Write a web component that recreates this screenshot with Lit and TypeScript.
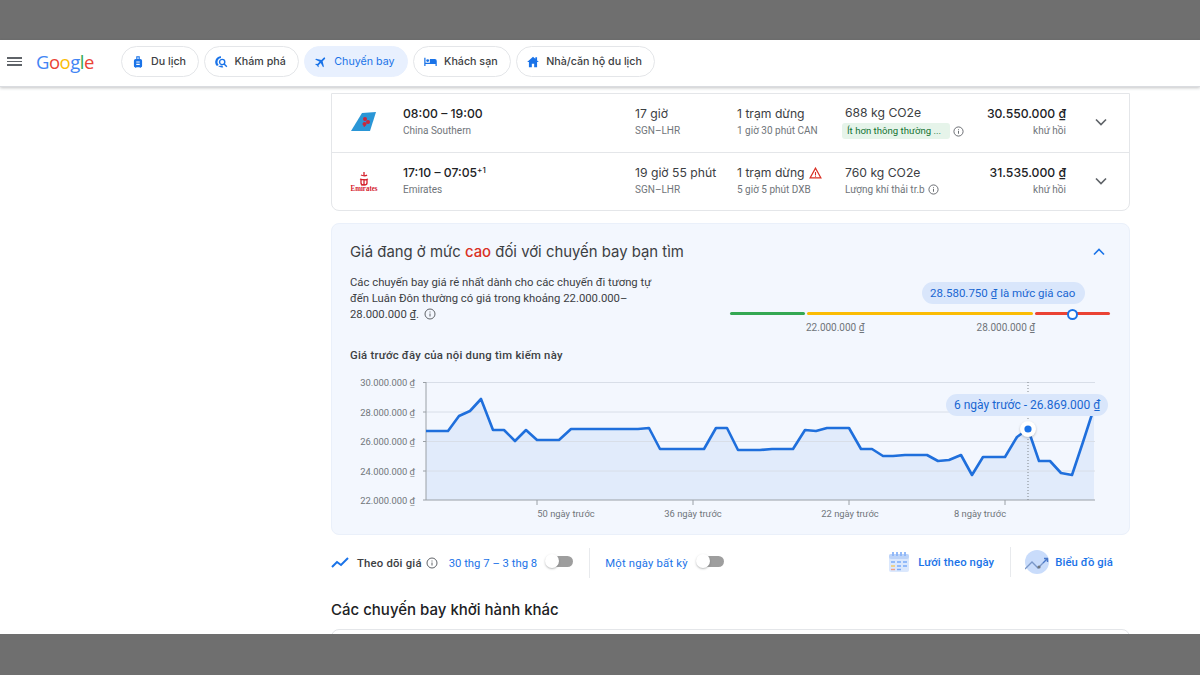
import { LitElement, css, html, svg } from 'lit';
import { customElement } from 'lit/decorators.js';

const BLUE = '#1a73e8';

// chart points in page pixels, the svg below is placed at 340,370
const line: [number, number][] = [
  [426, 431], [448, 431], [459, 416], [470, 411], [481, 399], [493, 430], [504, 430], [515, 441],
  [526, 430], [537, 440], [559, 440], [571, 429], [638, 429], [649, 428], [660, 449], [704, 449],
  [716, 428], [727, 428], [738, 450], [760, 450], [772, 449], [793, 449], [805, 430], [816, 431],
  [827, 428], [849, 428], [861, 449], [872, 449], [883, 456], [893, 456], [905, 455], [927, 455],
  [938, 461], [949, 460], [961, 455], [972, 475], [983, 457], [993, 457], [1005, 457], [1017, 437],
  [1028, 429], [1039, 461], [1050, 461], [1061, 473], [1072, 475], [1083, 442], [1094, 408],
];

const yLabels = ['30.000.000 ₫', '28.000.000 ₫', '26.000.000 ₫', '24.000.000 ₫', '22.000.000 ₫'];
const gridY = [382.5, 412, 441.5, 471, 500];
const xLabels: [number, string][] = [
  [566, '50 ngày trước'],
  [693, '36 ngày trước'],
  [850, '22 ngày trước'],
  [980, '8 ngày trước'],
];
const xTicks = [537, 693, 849, 1005];

const infoIcon = html`<svg class="info" viewBox="0 0 24 24" width="12" height="12">
  <circle cx="12" cy="12" r="10" fill="none" stroke="currentColor" stroke-width="2"></circle>
  <path d="M11 11h2v6h-2zM11 7h2v2h-2z" fill="currentColor"></path>
</svg>`;

const chevron = (up: boolean) => html`<svg viewBox="0 0 24 24" width="20" height="20">
  <path d=${up ? 'M6 15l6-6 6 6' : 'M6 9l6 6 6-6'} fill="none" stroke=${up ? BLUE : '#5f6368'} stroke-width="2"></path>
</svg>`;

@customElement('app-root')
export class AppRoot extends LitElement {
  static styles = css`
    :host {
      display: flex;
      flex-direction: column;
      width: 1200px;
      height: 675px;
      overflow: hidden;
      background: #fff;
      font-family: Roboto, 'Noto Sans', sans-serif;
      color: #3c4043;
    }
    .band {
      height: 40px;
      flex: none;
      background: #6f6f6f;
    }
    .band.bottom {
      height: 41px;
      position: relative;
      z-index: 2;
    }
    header {
      flex: none;
      height: 43px;
      padding-bottom: 3px;
      display: flex;
      align-items: center;
      background: #fff;
      border-bottom: 1px solid #dadce0;
      box-shadow: 0 1px 3px rgba(60, 64, 67, 0.3);
      position: relative;
      z-index: 1;
    }
    .menu {
      width: 15px;
      margin-left: 7px;
      display: flex;
      flex-direction: column;
      gap: 2px;
    }
    .menu i {
      height: 1.5px;
      background: #5f6368;
    }
    .logo {
      margin-left: 14px;
      width: 85px;
      font: 400 18.5px 'Open Sans', Lato, sans-serif;
      letter-spacing: -0.5px;
    }
    .chips {
      display: flex;
      gap: 5.5px;
    }
    .chip {
      height: 31px;
      box-sizing: border-box;
      display: flex;
      align-items: center;
      gap: 6px;
      padding: 0 12px 0 9px;
      border: 1px solid #e4e6e9;
      border-radius: 16px;
      font: 500 10.7px Inter, Roboto, sans-serif;
      color: #3c4043;
    }
    .chip.on {
      background: #e8f0fe;
      border-color: #e8f0fe;
      color: #1a73e8;
      font-weight: 400;
    }
    main {
      flex: 1;
      min-height: 0;
      margin-left: 331px;
      width: 799px;
      display: flex;
      flex-direction: column;
      padding-top: 6px;
    }
    .flights {
      border: 1px solid #e4e6e9;
      border-radius: 0 0 8px 8px;
      flex: none;
    }
    .flight {
      height: 58px;
      box-sizing: border-box;
      padding-bottom: 2px;
      display: grid;
      grid-template-columns: 71px 232px 102px 108px 125px 96px 1fr;
      align-items: center;
    }
    .flight + .flight {
      border-top: 1px solid #e4e6e9;
    }
    .logo-cell {
      display: flex;
      justify-content: center;
      padding-right: 8px;
    }
    .big {
      font: 400 12.2px/16px Inter, Roboto, sans-serif;
      color: #3c4043;
      display: flex;
      align-items: center;
      gap: 4px;
      white-space: nowrap;
    }
    .strong {
      font-weight: 500;
      color: #202124;
    }
    sup {
      font-size: 8px;
      line-height: 0;
      margin: -6px 0 0 -4px;
    }
    .small {
      font-size: 10px;
      line-height: 14px;
      margin-top: 2px;
      color: #70757a;
      display: flex;
      align-items: center;
      gap: 3px;
      white-space: nowrap;
    }
    .small .info {
      width: 11px;
      height: 11px;
      margin-left: 0;
    }
    .pill {
      background: #e6f4ea;
      color: #137333;
      border-radius: 3px;
      padding: 1px 5px;
      margin-left: -3px;
      width: 108px;
      box-sizing: border-box;
      font-size: 9.6px;
    }
    .price {
      text-align: right;
    }
    .price .big {
      justify-content: flex-end;
      font-weight: 500;
      color: #202124;
    }
    .price .small {
      justify-content: flex-end;
    }
    .expand {
      display: flex;
      justify-content: center;
      padding-left: 6px;
    }
    .insight {
      flex: none;
      height: 312px;
      box-sizing: border-box;
      margin-top: 12px;
      background: #f3f7fe;
      border: 1px solid #eaf0fa;
      border-radius: 8px;
      padding: 18px 19px 0 18px;
      position: relative;
    }
    .title {
      display: flex;
      justify-content: space-between;
      align-items: center;
      font: 400 14.9px/20px Inter, Roboto, sans-serif;
      color: #3c4043;
      padding-right: 1px;
    }
    .title b {
      font-weight: 500;
      color: #d93025;
    }
    .summary {
      display: flex;
      justify-content: space-between;
      margin-top: 13px;
    }
    .summary p {
      margin: 0;
      width: 320px;
      font-size: 11.3px;
      line-height: 16px;
      color: #3c4043;
    }
    .info {
      color: #5f6368;
      vertical-align: -2px;
      margin-left: 2px;
      flex: none;
    }
    .range {
      width: 380px;
      margin-top: 7px;
      position: relative;
    }
    .bubble {
      display: inline-block;
      background: #d9e6fb;
      color: #1967d2;
      border-radius: 11px;
      padding: 0 8px;
      line-height: 22px;
      font-size: 11.5px;
      white-space: nowrap;
    }
    .range .bubble {
      margin-left: 192px;
      padding-right: 10px;
    }
    .bar {
      display: flex;
      gap: 2px;
      margin-top: 8px;
    }
    .bar i {
      height: 3px;
      border-radius: 2px;
    }
    .thumb {
      position: absolute;
      left: 337px;
      top: 27px;
      width: 7px;
      height: 7px;
      border: 2px solid #1a73e8;
      border-radius: 50%;
      background: #fff;
    }
    .marks {
      display: flex;
      margin-top: 7px;
      font-size: 10px;
      line-height: 12px;
      color: #70757a;
    }
    .marks span:first-child {
      margin-left: 76px;
    }
    .marks span:last-child {
      margin-left: 112px;
    }
    h4 {
      margin: 14px 0 0;
      font-size: 11.3px;
      letter-spacing: 0.25px;
      line-height: 16px;
      font-weight: 500;
      color: #3c4043;
    }
    .chart {
      position: absolute;
      left: 8px;
      top: 146px;
    }
    .chart text {
      font: 9.4px Roboto, sans-serif;
      fill: #70757a;
    }
    .chart .bubble {
      position: absolute;
      left: 606px;
      top: 24px;
      font-size: 12px;
    }
    .tools {
      flex: none;
      height: 36px;
      margin-top: 10px;
      display: flex;
      align-items: center;
      font-size: 11.3px;
      letter-spacing: 0.2px;
      color: #1a73e8;
    }
    .tools .label {
      color: #3c4043;
      font-weight: 500;
      margin: 0 2px 0 8px;
    }
    .tools .dates {
      margin-left: 11px;
      letter-spacing: 0;
    }
    .switch {
      width: 28px;
      height: 16px;
      position: relative;
      margin: -2px 0 0 8px;
    }
    .switch::before {
      content: '';
      position: absolute;
      left: 8px;
      right: 0;
      top: 2px;
      height: 11px;
      border-radius: 6px;
      background: #9e9e9e;
    }
    .switch::after {
      content: '';
      position: absolute;
      left: 0;
      top: 0;
      width: 14px;
      height: 14px;
      border-radius: 50%;
      background: #fff;
      box-shadow: 0 1px 2px rgba(60, 64, 67, 0.35);
    }
    .sep {
      width: 1px;
      height: 30px;
      background: #e8eaed;
      margin: 0 15px 0 16px;
    }
    .views {
      margin-left: auto;
      display: flex;
      align-items: center;
      color: #1a73e8;
      font-weight: 500;
      letter-spacing: 0.1px;
      padding: 0 17px 2px 0;
    }
    .views .view {
      display: flex;
      align-items: center;
      gap: 8px;
    }
    .views .view.graph {
      gap: 6px;
    }
    .views .sep {
      margin: 0 14px 0 16px;
    }
    h3 {
      flex: none;
      margin: 19px 0 0;
      font: 500 15px/20px Inter, Roboto, sans-serif;
      color: #202124;
    }
    .next {
      flex: none;
      height: 20px;
      margin-top: 9px;
      border: 1px solid #e4e6e9;
      border-radius: 8px 8px 0 0;
    }
  `;

  private chart() {
    const pts = line.map(([x, y]) => `${x - 340},${y - 370}`).join(' ');
    return html`<div class="chart">
      <svg width="775" height="160" viewBox="0 0 775 160">
        <polygon points="86,130 ${pts} 754,130" fill="#e1ebfb"></polygon>
        ${gridY.slice(0, 4).map(
          (y) => svg`<line x1="86" x2="755" y1=${y - 370} y2=${y - 370} stroke="#d8dee8" stroke-width="1"></line>`,
        )}
        <line x1="86" x2="755" y1="130" y2="130" stroke="#9aa0a6" stroke-width="1"></line>
        <line x1="86" x2="86" y1="12" y2="130" stroke="#9aa0a6" stroke-width="1"></line>
        ${gridY.map((y) => svg`<line x1="83" x2="86" y1=${y - 370} y2=${y - 370} stroke="#9aa0a6"></line>`)}
        ${xTicks.map((x) => svg`<line x1=${x - 340} x2=${x - 340} y1="130" y2="135" stroke="#9aa0a6"></line>`)}
        ${yLabels.map(
          (t, i) => svg`<text x="75" y=${gridY[i] - 370 + 3.5} text-anchor="end">${t}</text>`,
        )}
        ${xLabels.map(([x, t]) => svg`<text x=${x - 340} y="147" text-anchor="middle">${t}</text>`)}
        <line x1="688" x2="688" y1="12" y2="130" stroke="#80868b" stroke-dasharray="1 2"></line>
        <polyline points=${pts} fill="none" stroke="#1f6fdc" stroke-width="2.6" stroke-linejoin="round"></polyline>
        <circle cx="688" cy="59" r="8" fill="#fff" style="filter: drop-shadow(0 1px 1px rgba(60,64,67,.3))"></circle>
        <circle cx="688" cy="59" r="3.6" fill=${BLUE}></circle>
      </svg>
      <span class="bubble">6 ngày trước - 26.869.000 ₫</span>
    </div>`;
  }

  render() {
    return html`
      <div class="band"></div>
      <header>
        <div class="menu"><i></i><i></i><i></i></div>
        <div class="logo">
          <span style="color:#4285f4">G</span><span style="color:#ea4335">o</span><span style="color:#fbbc05">o</span><span style="color:#4285f4">g</span><span style="color:#34a853">l</span><span style="color:#ea4335">e</span>
        </div>
        <nav class="chips">
          <div class="chip">
            <svg width="14" height="14" viewBox="0 0 24 24" fill=${BLUE}>
              <path d="M9 2h6v5h1a3 3 0 0 1 3 3v9a2 2 0 0 1-2 2v1h-2v-1H9v1H7v-1a2 2 0 0 1-2-2v-9a3 3 0 0 1 3-3h1zm2 2v3h2V4zm-2 7v2h6v-2zm0 4v2h6v-2z" fill-rule="evenodd"></path>
            </svg>
            Du lịch
          </div>
          <div class="chip">
            <svg width="14" height="14" viewBox="0 0 24 24">
              <path d="M12 2a10 10 0 0 0-7 17l3-2a7 7 0 0 1 4-12z" fill=${BLUE}></path>
              <path d="M7 19a10 10 0 0 0 9 2l-2-3z" fill=${BLUE}></path>
              <circle cx="14" cy="12" r="4.5" fill="none" stroke=${BLUE} stroke-width="2.4"></circle>
              <path d="M17 15l5 5" stroke=${BLUE} stroke-width="2.4"></path>
            </svg>
            Khám phá
          </div>
          <div class="chip on">
            <svg width="14" height="14" viewBox="0 0 24 24" fill=${BLUE}>
              <path d="M21 16v-2l-8-5V3.5a1.5 1.5 0 0 0-3 0V9l-8 5v2l8-2.5V19l-2 1.5V22l3.5-1 3.5 1v-1.5L13 19v-5.5z" transform="rotate(45 12 12)"></path>
            </svg>
            Chuyến bay
          </div>
          <div class="chip">
            <svg width="15" height="15" viewBox="0 0 24 24" fill=${BLUE}>
              <path d="M2 6h2v8h7V8h8a3 3 0 0 1 3 3v8h-2v-3H4v3H2z"></path>
              <circle cx="7.5" cy="10.5" r="2.3"></circle>
            </svg>
            Khách sạn
          </div>
          <div class="chip">
            <svg width="14" height="14" viewBox="0 0 24 24" fill=${BLUE}>
              <path d="M12 3L2 12h3v9h5v-6h4v6h5v-9h3l-3-2.7V4h-3v2.6z"></path>
            </svg>
            Nhà/căn hộ du lịch
          </div>
        </nav>
      </header>
      <main>
        <section class="flights">
          <div class="flight">
            <div class="logo-cell">
              <svg width="28" height="22" viewBox="0 0 28 22">
                <path d="M12 2L26 1l-6 19H1z" fill="#2a96d6"></path>
                <circle cx="15" cy="8" r="2" fill="#c8283c"></circle>
                <circle cx="18" cy="11" r="2" fill="#c8283c"></circle>
                <circle cx="14.5" cy="13" r="2" fill="#c8283c"></circle>
                <path d="M14 16l2-4" stroke="#c8283c" stroke-width="1"></path>
              </svg>
            </div>
            <div>
              <div class="big strong">08:00 – 19:00</div>
              <div class="small">China Southern</div>
            </div>
            <div>
              <div class="big">17 giờ</div>
              <div class="small">SGN–LHR</div>
            </div>
            <div>
              <div class="big">1 trạm dừng</div>
              <div class="small">1 giờ 30 phút CAN</div>
            </div>
            <div>
              <div class="big">688 kg CO2e</div>
              <div class="small"><span class="pill">Ít hơn thông thường ...</span>${infoIcon}</div>
            </div>
            <div class="price">
              <div class="big">30.550.000 ₫</div>
              <div class="small">khứ hồi</div>
            </div>
            <div class="expand">${chevron(false)}</div>
          </div>
          <div class="flight">
            <div class="logo-cell">
              <svg width="30" height="20" viewBox="0 0 30 20">
                <path d="M15 1v4M12 4c2 1 5 1 6 0M11 8c3 1 6 1 8 0M12 8v4c0 2 2 2 3 2s3 0 3-2V8M15 8v6" fill="none" stroke="#d4202c" stroke-width="1.3"></path>
                <text x="15" y="19.5" text-anchor="middle" textLength="27" lengthAdjust="spacingAndGlyphs" font-family="Liberation Serif, serif" font-size="7.5" font-weight="700" fill="#d4202c">Emirates</text>
              </svg>
            </div>
            <div>
              <div class="big strong">17:10 – 07:05 <sup>+1</sup></div>
              <div class="small">Emirates</div>
            </div>
            <div>
              <div class="big">19 giờ 55 phút</div>
              <div class="small">SGN–LHR</div>
            </div>
            <div>
              <div class="big">
                1 trạm dừng
                <svg width="13" height="12" viewBox="0 0 24 22">
                  <path d="M12 2L2 20h20z" fill="none" stroke="#d93025" stroke-width="2.2"></path>
                  <path d="M11 9h2v6h-2zM11 16h2v2h-2z" fill="#d93025"></path>
                </svg>
              </div>
              <div class="small">5 giờ 5 phút DXB</div>
            </div>
            <div>
              <div class="big">760 kg CO2e</div>
              <div class="small">Lượng khí thải tr.b ${infoIcon}</div>
            </div>
            <div class="price">
              <div class="big">31.535.000 ₫</div>
              <div class="small">khứ hồi</div>
            </div>
            <div class="expand">${chevron(false)}</div>
          </div>
        </section>

        <section class="insight">
          <div class="title">
            <span>Giá đang ở mức <b>cao</b> đối với chuyến bay bạn tìm</span>
            ${chevron(true)}
          </div>
          <div class="summary">
            <p>
              Các chuyến bay giá rẻ nhất dành cho các chuyến đi tương tự<br />
              đến Luân Đôn thường có giá trong khoảng 22.000.000–<br />
              28.000.000 ₫. ${infoIcon}
            </p>
            <div class="range">
              <span class="bubble">28.580.750 ₫ là mức giá cao</span>
              <div class="bar">
                <i style="width:75px;background:#34a853"></i>
                <i style="width:226px;background:#fbbc04"></i>
                <i style="width:75px;background:#ea4335"></i>
              </div>
              <div class="thumb"></div>
              <div class="marks"><span>22.000.000 ₫</span><span>28.000.000 ₫</span></div>
            </div>
          </div>
          <h4>Giá trước đây của nội dung tìm kiếm này</h4>
          ${this.chart()}
        </section>

        <section class="tools">
          <svg width="18" height="12" viewBox="0 0 18 12">
            <path d="M1 10l5-5 4 3 7-7" fill="none" stroke=${BLUE} stroke-width="2"></path>
          </svg>
          <span class="label">Theo dõi giá</span>
          ${infoIcon}
          <span class="dates">30 thg 7 – 3 thg 8</span>
          <span class="switch"></span>
          <span class="sep"></span>
          <span>Một ngày bất kỳ</span>
          <span class="switch"></span>
          <div class="views">
            <div class="view">
              <svg width="22" height="22" viewBox="0 0 22 22">
                <rect x="1" y="3" width="20" height="18" rx="2" fill="#dbe8fd"></rect>
                <rect x="1" y="3" width="20" height="5" rx="2" fill="#bcd3f8"></rect>
                <path d="M5 1v4M9 1v4M13 1v4M17 1v4" stroke="#8ab4f8" stroke-width="1.8"></path>
                <path d="M3 11h4M9 11h4M15 11h4M9 15h4M15 15h4M9 18.5h4" stroke="#7baaf7" stroke-width="1.4"></path>
                <path d="M3 15h4" stroke="#f4c95d" stroke-width="1.4"></path>
                <path d="M3 18.5h4" stroke="#ea9f8a" stroke-width="1.4"></path>
              </svg>
              Lưới theo ngày
            </div>
            <span class="sep"></span>
            <div class="view graph">
              <svg width="24" height="24" viewBox="0 0 24 24">
                <circle cx="12" cy="12" r="12" fill="#c9dcfb"></circle>
                <path d="M0 19l7-7 6 6 5-5" fill="none" stroke="#7a97c8" stroke-width="1.3"></path>
                <path d="M18 13l4-4M19 8.5h3.5V12" fill="none" stroke="#4a78c9" stroke-width="1.4"></path>
                <circle cx="14" cy="17" r="1.6" fill="#6f7680"></circle>
              </svg>
              Biểu đồ giá
            </div>
          </div>
        </section>

        <h3>Các chuyến bay khởi hành khác</h3>
        <div class="next"></div>
      </main>
      <div class="band bottom"></div>
    `;
  }
}
